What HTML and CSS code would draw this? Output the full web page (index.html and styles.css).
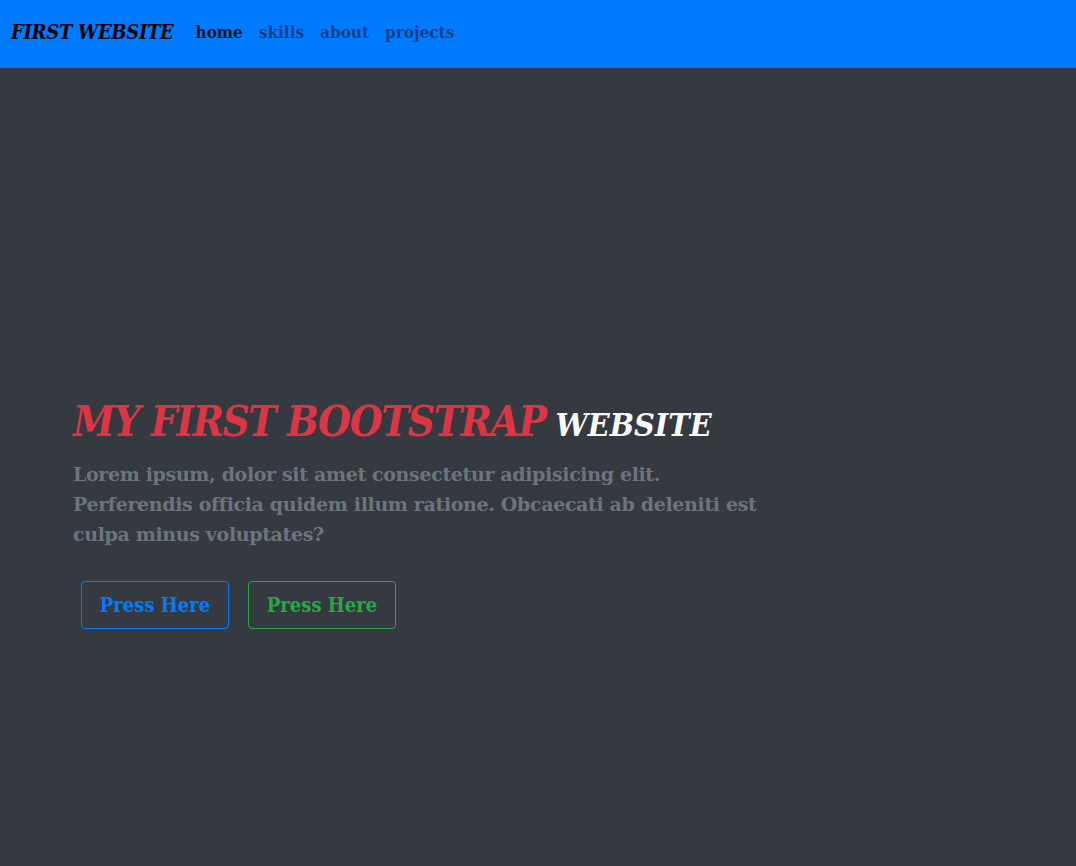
FILE: index.html
```html
<!DOCTYPE html>
<html lang="en">
<head>
<meta charset="utf-8">
<title>First Website</title>
<link rel="stylesheet" href="styles.css">
</head>
<body>
<nav class="navbar">
  <a class="brand" href="#">FIRST WEBSITE</a>
  <ul class="nav-links">
    <li><a class="nav-link active" href="#">home</a></li>
    <li><a class="nav-link" href="#">skills</a></li>
    <li><a class="nav-link" href="#">about</a></li>
    <li><a class="nav-link" href="#">projects</a></li>
  </ul>
</nav>
<section class="hero">
  <div class="container">
    <div class="hero-col">
      <h1 class="title"><span class="title-red">MY FIRST BOOTSTRAP</span> <span class="title-white">WEBSITE</span></h1>
      <p class="lead">Lorem ipsum, dolor sit amet consectetur adipisicing elit. Perferendis officia quidem illum ratione. Obcaecati ab deleniti est culpa minus voluptates?</p>
      <div class="actions">
        <a class="btn btn-blue" href="#">Press Here</a>
        <a class="btn btn-green" href="#">Press Here</a>
      </div>
    </div>
  </div>
</section>
</body>
</html>
```
FILE: styles.css
```css
* { box-sizing: border-box; }
html, body { margin: 0; padding: 0; }
body {
  background: #343a40;
  font-family: "DejaVu Serif Condensed", "DejaVu Serif", serif;
  font-weight: bold;
  overflow: hidden;
}
a { text-decoration: none; }
.navbar {
  background: #007bff;
  height: 68px;
  display: flex;
  align-items: center;
  padding: 0 11px 5px;
}
.brand {
  color: #000;
  font-style: italic;
  font-size: 20px;
  letter-spacing: -0.3px;
  margin-right: 14px;
}
.nav-links {
  list-style: none;
  margin: 0;
  padding: 0;
  display: flex;
}
.nav-link {
  display: block;
  padding: 8px 8px;
  font-size: 17px;
  color: rgba(0,0,0,0.5);
}
.nav-link.active { color: rgba(0,0,0,0.9); }
.hero {
  height: 798px;
  display: flex;
  align-items: center;
  padding-top: 100px;
}
.container {
  width: 960px;
  margin: 0 auto;
  padding: 0 15px;
}
.hero-col { max-width: 700px; }
.title {
  margin: 0 0 12px;
  font-style: italic;
  line-height: 1.2;
}
.title-red { color: #dc3545; font-size: 42px; letter-spacing: -1.4px; }
.title-white { color: #f8f9fa; font-size: 32px; }
.lead {
  margin: 0 0 24px;
  color: #6c757d;
  font-family: "DejaVu Serif", serif;
  font-size: 19px;
  letter-spacing: -0.35px;
  line-height: 30px;
}
.actions { display: flex; gap: 3px; }
.btn {
  display: inline-block;
  margin: 8px;
  padding: 10px 16px;
  font-size: 20px;
  line-height: 26px;
  border: 1px solid;
  border-radius: 4px;
  width: 148px;
  text-align: center;
}
.btn-blue { color: #007bff; border-color: #007bff; }
.btn-green { color: #28a745; border-color: #28a745; }
```
